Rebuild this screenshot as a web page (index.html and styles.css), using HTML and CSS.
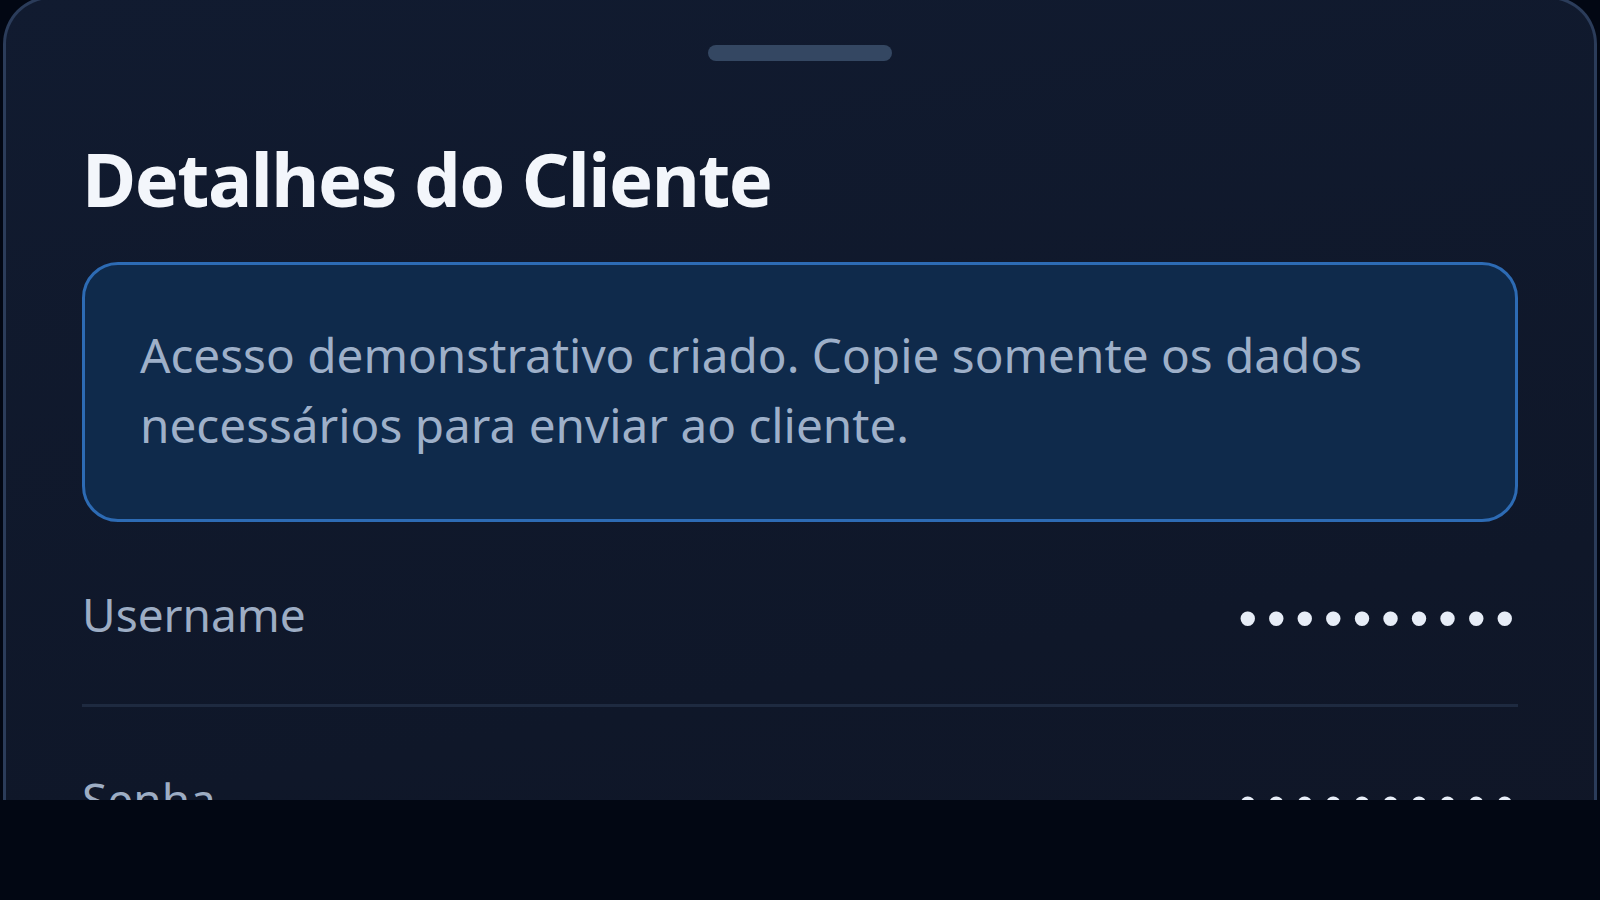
FILE: index.html
```html
<!DOCTYPE html>
<html lang="pt-BR">
<head>
<meta charset="utf-8">
<title>Detalhes do Cliente</title>
<link rel="stylesheet" href="styles.css">
</head>
<body>
<div class="viewport">
  <section class="sheet">
    <div class="handle"></div>
    <h1 class="title">Detalhes do Cliente</h1>
    <div class="notice">Acesso demonstrativo criado. Copie somente os dados necessários para enviar ao cliente.</div>
    <div class="rows">
      <div class="row">
        <span class="label">Username</span>
        <span class="mask">••••••••••</span>
      </div>
      <div class="row">
        <span class="label">Senha</span>
        <span class="mask">••••••••••</span>
      </div>
      <div class="row">
        <span class="label">Servidor</span>
        <span class="mask">••••••••••</span>
      </div>
    </div>
  </section>
</div>
</body>
</html>
```
FILE: styles.css
```css
html, body {
  margin: 0;
  padding: 0;
  background: #020713;
}
body {
  font-family: "Noto Sans", "Open Sans", sans-serif;
}
.viewport {
  height: 800px;
  overflow: hidden;
}
.sheet {
  margin: -4px 3px 0;
  min-height: 1100px;
  box-sizing: border-box;
  padding: 0 76px;
  border: 3px solid #2b3c5a;
  border-bottom: none;
  border-radius: 48px 48px 0 0;
  background: linear-gradient(170deg, #111b30 0%, #0f1729 60%, #111626 100%);
}
.handle {
  width: 184px;
  height: 16px;
  margin: 46px auto 0;
  border-radius: 8px;
  background: #344762;
}
.title {
  margin: 78px 0 0;
  font-size: 74px;
  line-height: 80px;
  font-weight: 700;
  letter-spacing: -1.5px;
  color: #f3f6fb;
}
.notice {
  margin-top: 43px;
  box-sizing: border-box;
  height: 260px;
  padding: 55px 55px;
  border: 3px solid #2d6bb4;
  border-radius: 36px;
  background: #0f2a4b;
  color: #9eb0c9;
  font-size: 47.7px;
  line-height: 70px;
}
.rows {
  display: flex;
  flex-direction: column;
}
.row {
  display: flex;
  align-items: center;
  justify-content: space-between;
  padding: 62px 0 60px;
  border-bottom: 3px solid #1e2a40;
}
.label {
  font-size: 46px;
  line-height: 60px;
  color: #9dadc4;
}
.mask {
  font-family: "Liberation Sans", Arial, sans-serif;
  font-size: 53px;
  line-height: 60px;
  color: #e7edf7;
  letter-spacing: 10px;
  margin: 5px -6px -5px 0;
}
```
